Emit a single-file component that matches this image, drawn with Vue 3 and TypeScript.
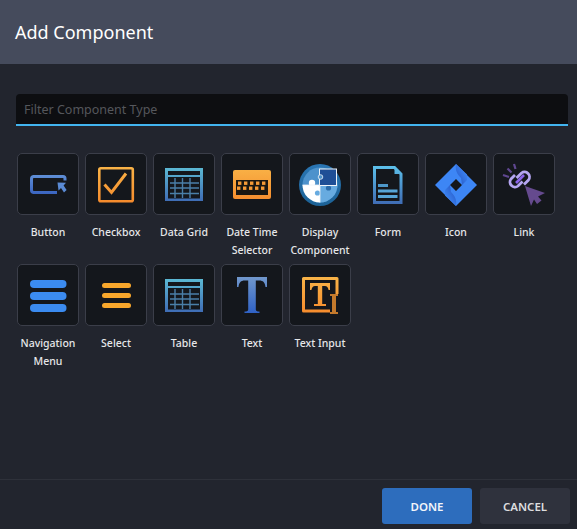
<script setup lang="ts">
const components: { name: string; icon: string }[] = [
  { name: 'Button', icon: 'button' },
  { name: 'Checkbox', icon: 'checkbox' },
  { name: 'Data Grid', icon: 'grid' },
  { name: 'Date Time Selector', icon: 'date' },
  { name: 'Display Component', icon: 'puzzle' },
  { name: 'Form', icon: 'form' },
  { name: 'Icon', icon: 'diamond' },
  { name: 'Link', icon: 'link' },
  { name: 'Navigation Menu', icon: 'nav' },
  { name: 'Select', icon: 'select' },
  { name: 'Table', icon: 'table' },
  { name: 'Text', icon: 'text' },
  { name: 'Text Input', icon: 'textinput' }
]

// клавиши для иконки Date Time
const keys: number[][] = [
  [17, 23, 29, 35, 41],
  [17, 23, 29, 35, 41]
]
</script>

<template>
  <div class="dialog">
    <svg class="defs" width="0" height="0">
      <defs>
        <linearGradient id="g-orange" gradientUnits="userSpaceOnUse" x1="0" y1="14" x2="0" y2="50">
          <stop offset="0" stop-color="#f9b347" />
          <stop offset="1" stop-color="#f58a2c" />
        </linearGradient>
        <linearGradient id="g-table" gradientUnits="userSpaceOnUse" x1="0" y1="15" x2="0" y2="48">
          <stop offset="0" stop-color="#5bb8d3" />
          <stop offset="1" stop-color="#3f6db5" />
        </linearGradient>
        <linearGradient id="g-form" gradientUnits="userSpaceOnUse" x1="0" y1="13" x2="0" y2="51">
          <stop offset="0" stop-color="#5cc0ea" />
          <stop offset="1" stop-color="#3f6cb4" />
        </linearGradient>
        <linearGradient id="g-text" gradientUnits="userSpaceOnUse" x1="0" y1="13" x2="0" y2="49">
          <stop offset="0" stop-color="#7198cc" />
          <stop offset="1" stop-color="#2f62c6" />
        </linearGradient>
        <linearGradient id="g-btn" gradientUnits="userSpaceOnUse" x1="0" y1="22" x2="0" y2="41">
          <stop offset="0" stop-color="#5f8fd6" />
          <stop offset="1" stop-color="#3a64c0" />
        </linearGradient>
        <linearGradient id="g-ring" gradientUnits="userSpaceOnUse" x1="0" y1="11" x2="0" y2="53">
          <stop offset="0" stop-color="#2a76b4" />
          <stop offset="1" stop-color="#1c6296" />
        </linearGradient>
        <linearGradient id="g-diamond" gradientUnits="userSpaceOnUse" x1="30" y1="22" x2="40" y2="16">
          <stop offset="0" stop-color="#2a5fcc" />
          <stop offset="1" stop-color="#3d86f5" />
        </linearGradient>
      </defs>
    </svg>

    <header class="dialog-header">Add Component</header>

    <main class="dialog-body">
      <div class="filter">
        <input class="filter-input" type="text" placeholder="Filter Component Type" />
      </div>

      <div class="grid">
        <div v-for="item in components" :key="item.name" class="cell">
          <div class="tile">
            <svg viewBox="1 1 60 60" width="60" height="60">
              <g v-if="item.icon === 'button'">
                <path d="M48 27.5 V25.5 A2 2 0 0 0 46 23.5 H16.5 A2.5 2.5 0 0 0 14.5 26 V37 A2.5 2.5 0 0 0 16.5 39.5 H40" fill="none" stroke="url(#g-btn)" stroke-width="3" />
                <path d="M40.5 29.5 L49 29.8 L46.6 32.6 L49.6 37 L47 39.5 L44 35 L41.5 37.5 Z" fill="#5a8ad4" />
              </g>

              <g v-else-if="item.icon === 'checkbox'">
                <rect x="14.3" y="15.3" width="33.5" height="33" rx="1.5" fill="none" stroke="url(#g-orange)" stroke-width="2.6" />
                <path d="M19.5 31.5 L26.5 39.5 L41 20.5" fill="none" stroke="url(#g-orange)" stroke-width="3" />
              </g>

              <g v-else-if="item.icon === 'grid' || item.icon === 'table'">
                <rect x="12" y="15" width="38" height="33" fill="url(#g-table)" />
                <rect x="15" y="18" width="32" height="4" fill="#14171c" />
                <rect x="15" y="24" width="32" height="21.5" fill="#14171c" />
                <path d="M17 30 H46 M17 35 H46 M17 40.5 H46 M22 25 V45 M29.5 25 V45 M37 25 V45" stroke="#4a7fa8" stroke-width="1.4" fill="none" />
              </g>

              <g v-else-if="item.icon === 'date'">
                <rect x="12" y="17" width="38" height="29" rx="2" fill="url(#g-orange)" />
                <rect x="15" y="27" width="32" height="15" fill="#1a1712" />
                <g v-for="(row, r) in keys" :key="r">
                  <rect v-for="x in row" :key="x" :x="x - (r === 1 ? 1 : 0)" :y="28.5 + r * 5" width="3.4" height="3.4" fill="#f59a36" />
                </g>
              </g>

              <g v-else-if="item.icon === 'puzzle'">
                <circle cx="31" cy="32" r="21" fill="url(#g-ring)" />
                <circle cx="31" cy="32" r="17.5" fill="#4d92cc" />
                <path d="M13.5 32 H31 V49.5 A17.5 17.5 0 0 1 13.5 32 Z" fill="#fff" />
                <circle cx="23" cy="30" r="3.2" fill="#fff" />
                <path d="M31 32 H48.5 A17.5 17.5 0 0 1 31 49.5 Z" fill="#67abe0" />
                <circle cx="28.5" cy="40" r="2.6" fill="#67abe0" />
                <circle cx="39.5" cy="35" r="2.6" fill="#2a6aa8" />
                <rect x="30.5" y="16" width="17" height="16.5" fill="#1f4f96" stroke="#eef3f8" stroke-width="1" />
                <circle cx="31.5" cy="24" r="2.3" fill="#4d92cc" stroke="#eef3f8" stroke-width="0.8" />
                <path d="M31 32 V49.5 M13.5 32 H31" stroke="#eef3f8" stroke-width="0.8" fill="none" />
              </g>

              <g v-else-if="item.icon === 'form'">
                <path d="M17.5 14.5 H37.5 L44 21 V49.5 H17.5 Z" fill="none" stroke="url(#g-form)" stroke-width="3" />
                <path d="M37.5 14 V21 H44.5 Z" fill="url(#g-form)" />
                <rect x="21" y="31" width="10" height="3" fill="#4d97c9" />
                <rect x="21" y="36.5" width="19.5" height="3" fill="#57a6d8" />
                <rect x="21" y="42" width="19.5" height="3" fill="#57a6d8" />
              </g>

              <g v-else-if="item.icon === 'diamond'">
                <path d="M31 11 L52 32 L31 53 L10 32 Z M31 26 L25 32 L31 38 L37 32 Z" fill="#3d86f5" fill-rule="evenodd" />
                <path d="M31 11 C30 17 32 21 36 25 L37 32 L42 27 V21.5 Z" fill="url(#g-diamond)" />
                <path d="M31 11 C30 17 32 21 36 25 L37 32 L42 27 V21.5 Z" fill="url(#g-diamond)" transform="rotate(180 31 32)" />
              </g>

              <g v-else-if="item.icon === 'link'">
                <path d="M21 11 L22.5 16 M14.5 15.5 L18.5 19.5 M10 22 L16 24" stroke="#5f4790" stroke-width="2.2" fill="none" />
                <g fill="none" stroke="#b5a6f2" stroke-width="2.8">
                  <path d="M22 22 L18 26 A5 5 0 0 0 25 33 L29.5 28.5" />
                  <path d="M23.5 25 L28.5 20 A5 5 0 0 1 35.5 27 L31 31.5" />
                </g>
                <path d="M23 30 L31 22" stroke="#8b63ea" stroke-width="2.6" />
                <path d="M32 33 L52 40 L45 43.5 L48.5 47.5 L44 51 L41 46.5 L38 53 Z" fill="#654a8e" />
              </g>

              <g v-else-if="item.icon === 'nav'">
                <rect x="13" y="16" width="36.5" height="8" rx="4" fill="#3b8bf0" />
                <rect x="13" y="28" width="36.5" height="8" rx="4" fill="#3b8bf0" />
                <rect x="13" y="40" width="36.5" height="8" rx="4" fill="#3b8bf0" />
              </g>

              <g v-else-if="item.icon === 'select'">
                <rect x="17" y="19" width="29" height="5" rx="2.5" fill="#f8a72c" />
                <rect x="17" y="29" width="29" height="5" rx="2.5" fill="#f8a72c" />
                <rect x="17" y="39" width="29" height="5" rx="2.5" fill="#f8a72c" />
              </g>

              <g v-else-if="item.icon === 'text'">
                <path d="M16 13 H46 V23 H44.5 C44 18.5 42 16.5 38.5 16.5 H34.8 V45.5 C34.8 47 36 47.5 38.5 47.5 V49 H23.5 V47.5 C26 47.5 27.2 47 27.2 45.5 V16.5 H23.5 C20 16.5 18 18.5 17.5 23 H16 Z" fill="url(#g-text)" />
              </g>

              <g v-else-if="item.icon === 'textinput'">
                <path d="M48 30 V14.5 H14.5 V47 H41" fill="none" stroke="url(#g-orange)" stroke-width="3" stroke-linejoin="round" />
                <path d="M21 19 H41 V26 H39.6 C39 23.5 38 22 36 22 H33.2 V40 H37 V42 H25 V40 H28.8 V22 H26 C24 22 23 23.5 22.4 26 H21 Z" fill="url(#g-orange)" />
                <path d="M41 30 H49 V32 H47 V48 H49 V50 H41 V48 H43 V32 H41 Z" fill="#c47a2c" />
              </g>
            </svg>
          </div>
          <div class="label">{{ item.name }}</div>
        </div>
      </div>
    </main>

    <footer class="dialog-footer">
      <button class="btn btn-primary" type="button">DONE</button>
      <button class="btn btn-secondary" type="button">CANCEL</button>
    </footer>
  </div>
</template>

<style scoped>
.dialog {
  width: 577px;
  height: 529px;
  display: flex;
  flex-direction: column;
  background: #22252e;
  color: #e4e5e7;
  font-family: 'Noto Sans', sans-serif;
  overflow: hidden;
}

.defs {
  position: absolute;
}

.dialog-header {
  height: 64px;
  flex: none;
  display: flex;
  align-items: center;
  padding-left: 15px;
  box-sizing: border-box;
  background: #454b5c;
  color: #fff;
  font-size: 18px;
}

.dialog-body {
  flex: 1;
  padding: 30px 9px 0 16px;
}

.filter {
  height: 30px;
  background: #0d0e11;
  border-bottom: 2px solid #42b4ef;
  border-radius: 4px 4px 0 0;
}

.filter-input {
  width: 100%;
  height: 100%;
  box-sizing: border-box;
  padding: 0 8px;
  border: 0;
  outline: 0;
  background: transparent;
  color: #e4e5e7;
  font-family: inherit;
  font-size: 12.5px;
}

.filter-input::placeholder {
  color: #55575c;
  opacity: 1;
}

.grid {
  margin: 27px 0 0 -2px;
  display: grid;
  grid-template-columns: repeat(8, 68px);
  grid-auto-rows: 111px;
}

.cell {
  display: flex;
  flex-direction: column;
  align-items: center;
}

.tile {
  width: 62px;
  height: 62px;
  box-sizing: border-box;
  border: 1px solid #3b3e49;
  border-radius: 5px;
  background: #14171c;
}

.tile svg {
  display: block;
}

.label {
  margin-top: 8px;
  width: 68px;
  text-align: center;
  font-size: 10.5px;
  font-weight: 500;
  line-height: 18px;
  color: #e6e7e9;
}

.dialog-footer {
  height: 50px;
  flex: none;
  box-sizing: border-box;
  display: flex;
  justify-content: flex-end;
  gap: 8px;
  padding: 8px 7px 0 0;
  border-top: 1px solid #2e313a;
}

.btn {
  width: 90px;
  height: 36px;
  border: 0;
  border-radius: 3px;
  font-family: inherit;
  font-size: 11.5px;
  font-weight: 600;
}

.btn-primary {
  background: #2d6dbd;
  color: #f2f5fa;
}

.btn-secondary {
  background: #2f323d;
  color: #dcdddf;
}
</style>

<style>
html,
body {
  margin: 0;
  background: #22252e;
}
</style>
